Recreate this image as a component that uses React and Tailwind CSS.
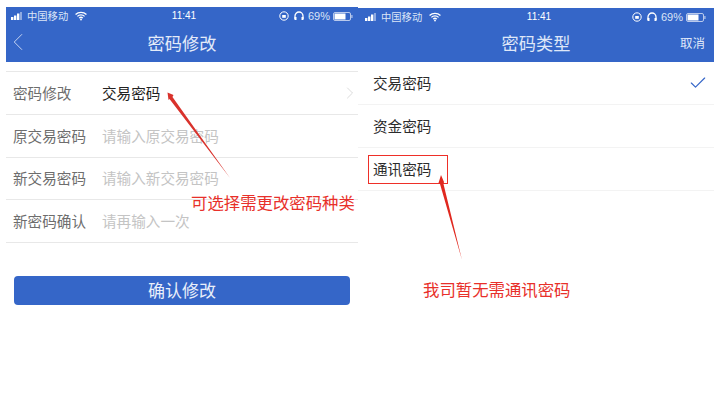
import { ChevronLeft, ChevronRight, Check } from "lucide-react";

const font = { fontFamily: '"Noto Sans CJK SC", "Liberation Sans", sans-serif' };

function StatusBar({ second }) {
  return (
    <div className={`flex h-[18px] items-center text-[10.3px] leading-none text-[#dbe5f7] ${second ? "pl-[7px] pr-[8px]" : "pl-[5px] pr-[5px]"}`}>
      <div className="flex flex-1 items-center">
        <svg width="13" height="8" viewBox="0 0 13 8" className="mr-[3px]">
          <rect x="0" y="5" width="2.4" height="3" fill="#fff" />
          <rect x="3" y="3.5" width="2.4" height="4.5" fill="#fff" />
          <rect x="6" y="1.5" width="2.4" height="6.5" fill="#fff" />
          <rect x="9" y="0" width="2" height="8" fill="#8fa9e0" />
        </svg>
        <span>中国移动</span>
        <svg width="12" height="10" viewBox="0 0 13 10" className="ml-[7px]">
          <path d="M0.6 3.4a8.4 8.4 0 0 1 11.8 0M2.6 5.4a5.6 5.6 0 0 1 7.8 0M4.5 7.3a2.9 2.9 0 0 1 4 0" fill="none" stroke="#fff" strokeWidth="1.4" />
          <circle cx="6.5" cy="8.8" r="1" fill="#fff" />
        </svg>
      </div>
      <span className={`text-[10px] text-white ${second ? "ml-[7px]" : "ml-[4px]"}`} style={{ fontFamily: '"Liberation Sans", sans-serif' }}>11:41</span>
      <div className="flex flex-1 items-center justify-end">
        <svg width="10" height="10" viewBox="0 0 10 10" className="mr-[5px]">
          <circle cx="5" cy="5" r="4.2" fill="none" stroke="#fff" strokeWidth="1" />
          <rect x="3.2" y="4" width="3.6" height="2.8" fill="#fff" />
        </svg>
        <svg width="10" height="10" viewBox="0 0 10 10" className="mr-[4px]">
          <path d="M1 8V5a4 4 0 0 1 8 0v3" fill="none" stroke="#fff" strokeWidth="1.3" />
          <rect x="0.5" y="6" width="2" height="3" fill="#fff" />
          <rect x="7.5" y="6" width="2" height="3" fill="#fff" />
        </svg>
        <span className="mr-[3px] text-[11px]" style={{ fontFamily: '"Liberation Sans", sans-serif' }}>69%</span>
        <svg width="20" height="9" viewBox="0 0 20 9">
          <rect x="0.5" y="0.5" width="17" height="8" rx="1.5" fill="none" stroke="#b9c9ec" />
          <rect x="1.5" y="1.5" width="11" height="6" fill="#fff" />
          <rect x="18.3" y="3" width="1.2" height="3" fill="#b9c9ec" />
        </svg>
      </div>
    </div>
  );
}

function FormRow({ label, value, placeholder, arrow }) {
  return (
    <div className="flex h-[42.75px] items-center border-b border-[#e8e8e8] pl-[7px] pr-[6px] text-[14.6px]">
      <span className="w-[89px] text-[#6d6d6d]">{label}</span>
      {value && <span className="flex-1 text-[#222]">{value}</span>}
      {placeholder && <span className="flex-1 text-[#c4c4c4]">{placeholder}</span>}
      {arrow && <ChevronRight size={20} strokeWidth={0.8} className="-mr-[8px] text-[#c8c8c8]" />}
    </div>
  );
}

function TypeRow({ label, checked }) {
  return (
    <div className="flex h-[43px] items-center justify-between border-b border-[#f3f3f3] pl-[15px] pr-[6px] text-[14.6px] text-[#2b2b2b]">
      <span>{label}</span>
      {checked && <Check size={20} strokeWidth={1.4} className="text-[#3566c8]" />}
    </div>
  );
}

export default function App() {
  return (
    <div className="relative h-[412px] w-[718px] overflow-hidden bg-white" style={font}>
      <div className="flex pl-[6px] pr-[4px] pt-[7px]">
        {/* left screen */}
        <div className="w-[352px]">
          <div className="h-[55px] bg-[#3566c8]">
            <StatusBar />
            <div className="relative flex h-[37px] items-center justify-center pb-[1px] text-[17.2px] text-[#e4ebf9]">
              <ChevronLeft size={30} strokeWidth={0.8} className="absolute -left-[3px] top-[2px] text-[#c5d3f0]" />
              密码修改
            </div>
          </div>
          <div className="mt-[9px] border-t border-[#e8e8e8]">
            <FormRow label="密码修改" value="交易密码" arrow />
            <FormRow label="原交易密码" placeholder="请输入原交易密码" />
            <FormRow label="新交易密码" placeholder="请输入新交易密码" />
            <FormRow label="新密码确认" placeholder="请再输入一次" />
          </div>
          <div className="ml-[8px] mt-[33px] flex h-[29px] w-[336px] items-center justify-center rounded-[4px] bg-[#3566c8] pb-[2px] text-[17px] text-[#e9effa]">
            确认修改
          </div>
        </div>

        {/* right screen */}
        <div className="w-[356px] pt-[1px]">
          <div className="h-[54px] bg-[#3566c8]">
            <StatusBar second />
            <div className="relative flex h-[36px] items-center justify-center pb-[2px] text-[17.2px] text-[#dfe7f8]">
              密码类型
              <span className="absolute right-[9px] top-[8px] text-[12.5px] text-[#dfe7f8]">取消</span>
            </div>
          </div>
          <TypeRow label="交易密码" checked />
          <TypeRow label="资金密码" />
          <TypeRow label="通讯密码" />
        </div>
      </div>

      {/* annotations */}
      <div className="absolute left-[368px] top-[155px] h-[29px] w-[80px] border border-[#ee2f28]" />
      <svg className="absolute left-0 top-0" width="718" height="412" viewBox="0 0 718 412">
        <polygon points="167.5,92.5 173.5,95 172.5,97 230,178 169.5,99 168.5,100" fill="#d9322c" />
        <polygon points="441,175 444,182 443.5,184 462,260 440,184 438.5,183" fill="#e0281f" />
      </svg>
      <span className="absolute left-[191px] top-[190px] text-[16.4px] leading-[24px] whitespace-nowrap text-[#e8302a]">可选择需更改密码种类</span>
      <span className="absolute left-[423px] top-[277px] text-[16.4px] leading-[24px] whitespace-nowrap text-[#e8302a]">我司暂无需通讯密码</span>
    </div>
  );
}
